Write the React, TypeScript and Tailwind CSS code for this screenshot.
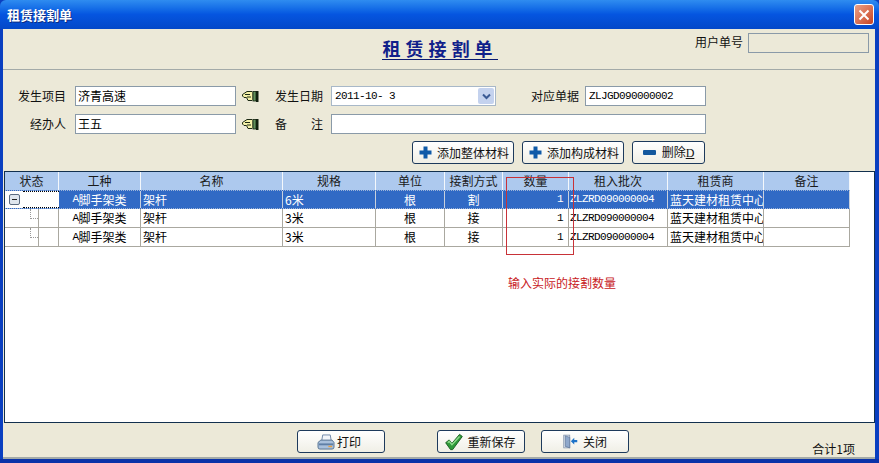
import * as React from 'react';

const cjk = '[font-family:"Noto_Sans_CJK_SC","Liberation_Sans",sans-serif]';
const mono = 'font-["Liberation_Mono",monospace] text-[11px] tracking-[-0.6px]';

const columns = [
  { label: '状态', width: 'w-[54px]' },
  { label: '工种', width: 'w-[82px]' },
  { label: '名称', width: 'w-[142px]' },
  { label: '规格', width: 'w-[93px]' },
  { label: '单位', width: 'w-[69px]' },
  { label: '接割方式', width: 'w-[58px]' },
  { label: '数量', width: 'w-[66px]' },
  { label: '租入批次', width: 'w-[99px]' },
  { label: '租赁商', width: 'w-[96px]' },
  { label: '备注', width: 'w-[86px]' },
];

const rows = [
  { spec: '6米', way: '割', selected: true },
  { spec: '3米', way: '接', selected: false },
  { spec: '3米', way: '接', selected: false },
];

function Hand() {
  return (
    <svg width="17" height="12" viewBox="0 0 17 12" className="shrink-0">
      <path d="M0.5 4.5 L5 1.5 H10 L11 2.5 V9.5 L10 10.5 H6 L4.5 7.5 H2 L0.5 6 Z" fill="#f6f2a8" stroke="#1c2a14" strokeWidth="1" />
      <path d="M3 4.5 H8 M5 7 H9" stroke="#1c2a14" strokeWidth="1" />
      <rect x="11" y="1.5" width="3" height="9.5" fill="#5f8f5a" stroke="#14240f" strokeWidth="0.8" />
      <rect x="14" y="1" width="2.5" height="11" fill="#10200e" />
    </svg>
  );
}

function Plus() {
  return (
    <svg width="13" height="13" viewBox="0 0 13 13" className="shrink-0">
      <path d="M4.5 0.5 H8.5 V4.5 H12.5 V8.5 H8.5 V12.5 H4.5 V8.5 H0.5 V4.5 H4.5 Z" fill="#0f5aa8" />
    </svg>
  );
}

function Minus() {
  return (
    <svg width="13" height="5" viewBox="0 0 13 5" className="shrink-0">
      <rect width="13" height="5" rx="1" fill="#14589e" />
    </svg>
  );
}

function Printer() {
  return (
    <svg width="18" height="16" viewBox="0 0 19 17" className="shrink-0">
      <path d="M6 1 H14 L15 7 H5 Z" fill="#f2f5fa" stroke="#6d86a8" />
      <path d="M1 9 L4 6.5 H16 L18 9 V14 Q18 16 16 16 H3 Q1 16 1 14 Z" fill="#a9c0dc" stroke="#54708f" />
      <rect x="2" y="10" width="15" height="2" fill="#5f7fa6" />
      <rect x="12" y="12.5" width="4" height="1.5" fill="#e8a040" />
    </svg>
  );
}

function Check() {
  return (
    <svg width="18" height="18" viewBox="0 0 26 24" className="shrink-0">
      <path d="M1 13 L6 9 L10 14 L21 1 L25 4 L11 23 H8 Z" fill="#2f9a3a" stroke="#17601f" strokeWidth="1.4" />
      <path d="M4 13 L6 11 L10 16 L21 4" fill="none" stroke="#8fdc8c" strokeWidth="2" />
    </svg>
  );
}

function Door() {
  return (
    <svg width="15" height="15" viewBox="0 0 20 19" className="shrink-0">
      <rect x="1" y="1" width="8" height="17" fill="#dfe8f2" stroke="#7f8ea8" />
      <path d="M3 2 L9 4 V18 L3 16 Z" fill="#8fa8cc" stroke="#50688c" strokeWidth="0.8" />
      <path d="M19 7.5 H15 V4.5 L10.5 9 L15 13.5 V10.5 H19 Z" fill="#1c72c8" />
    </svg>
  );
}

function Label({ children, className }: { children: React.ReactNode; className: string }) {
  return <span className={`shrink-0 whitespace-nowrap text-right text-[12px] leading-none text-[#111] ${className}`}>{children}</span>;
}

function Field({ value, className }: { value?: string; className: string }) {
  return (
    <div className={`flex h-[20px] shrink-0 items-center border border-[#8a9aa8] bg-white px-[2px] text-[12px] text-black ${className}`}>
      {value}
    </div>
  );
}

function ActionButton({ children, className }: { children: React.ReactNode; className: string }) {
  return (
    <button className={`flex shrink-0 items-center justify-center rounded-[3px] border border-[#1d3a5c] bg-gradient-to-b from-white to-[#f0efe6] text-[12px] text-[#111] ${className}`}>
      {children}
    </button>
  );
}

export default function App() {
  return (
    <div className={`relative flex h-[463px] w-[879px] flex-col overflow-hidden bg-[#0a3fc0] ${cjk}`}>
      {/* title bar */}
      <div className="flex h-[29px] shrink-0 items-center justify-between rounded-t-[6px] bg-gradient-to-b from-[#2f8cf0] via-[#0555e0] to-[#0348c8] pl-[7px] pr-[5px]">
        <span className="text-[13px] font-bold text-white [text-shadow:1px_1px_#0a2a80]">租赁接割单</span>
        <div className="flex h-[21px] w-[20px] items-center justify-center rounded-[3px] border border-white bg-gradient-to-br from-[#e8a088] to-[#c8401c]">
          <svg width="12" height="12" viewBox="0 0 12 12">
            <path d="M1.5 1.5 L10.5 10.5 M10.5 1.5 L1.5 10.5" stroke="white" strokeWidth="2" />
          </svg>
        </div>
      </div>

      <div className="ml-[3px] mr-[4px] flex min-h-0 flex-1 flex-col bg-[#ece9d8]">
        {/* heading */}
        <div className="grid h-[41px] shrink-0 grid-cols-[1fr_auto_1fr] border-b border-[#a3aaa8] pl-[1px]">
          <div />
          <span className="mt-[8px] h-[23px] border-b border-[#0a1a70] pl-[1px] text-[18px] font-bold leading-[22px] tracking-[5px] text-[#10208a] [font-family:'Noto_Sans_CJK_SC',serif]">
            租赁接割单
          </span>
          <div className="flex items-start justify-end pr-[6px] pt-[4px]">
            <span className="mr-[5px] mt-[2px] text-[12px] leading-[14px] text-[#111]">用户单号</span>
            <div className="h-[20px] w-[121px] border border-[#8a9aa8] bg-[#ece9d8]" />
          </div>
        </div>

        {/* form */}
        <div className="h-[101px] shrink-0 pl-[1px] pt-[16px]">
          <div className="flex h-[20px] items-center">
            <Label className="w-[62px]">发生项目</Label>
            <Field value="济青高速" className="ml-[9px] w-[161px]" />
            <span className="ml-[6px]"><Hand /></span>
            <Label className="ml-[16px] w-[48px]">发生日期</Label>
            <div className="ml-[8px] flex h-[20px] w-[165px] shrink-0 items-center justify-between border border-[#a8b8c8] bg-white pl-[3px] pr-[1px]">
              <span className={`${mono} text-black`}>2011-10- 3</span>
              <div className="flex h-[16px] w-[16px] items-center justify-center rounded-[2px] bg-[#c4d2ee]">
                <svg width="9" height="7" viewBox="0 0 9 7">
                  <path d="M1 1.5 L4.5 5 L8 1.5" fill="none" stroke="#3a5a94" strokeWidth="2" />
                </svg>
              </div>
            </div>
            <Label className="ml-[35px] w-[48px]">对应单据</Label>
            <div className="ml-[6px] flex h-[20px] w-[121px] shrink-0 items-center border border-[#8a9aa8] bg-white pl-[3px]">
              <span className={`${mono} text-black`}>ZLJGD090000002</span>
            </div>
          </div>
          <div className="mt-[8px] flex h-[20px] items-center">
            <Label className="w-[62px]">经办人</Label>
            <Field value="王五" className="ml-[9px] w-[161px]" />
            <span className="ml-[6px]"><Hand /></span>
            <div className="ml-[16px] flex w-[48px] shrink-0 justify-between text-[12px] leading-none text-[#111]">
              <span>备</span>
              <span>注</span>
            </div>
            <Field className="ml-[8px] w-[375px]" />
          </div>
          <div className="mt-[7px] flex h-[23px] items-center pl-[408px]">
            <ActionButton className="h-[23px] w-[102px] gap-[5px] pl-[2px]"><Plus />添加整体材料</ActionButton>
            <ActionButton className="ml-[8px] h-[23px] w-[102px] gap-[5px] pl-[2px]"><Plus />添加构成材料</ActionButton>
            <ActionButton className="ml-[8px] h-[23px] w-[73px] gap-[6px]">
              <Minus />
              <span>删除<span className="font-['Liberation_Serif',serif] underline">D</span></span>
            </ActionButton>
          </div>
        </div>

        {/* grid */}
        <div className="ml-[1px] min-h-0 flex-1 overflow-hidden border border-[#12304e] bg-white">
          <div className="flex h-[18px] w-[845px] bg-[#adc9ee]">
            {columns.map((c) => (
              <div key={c.label} className={`flex h-full shrink-0 items-center justify-center border-r border-r-[#f4f8fc] text-[12px] text-[#1a1a1a] ${c.width}`}>
                {c.label}
              </div>
            ))}
          </div>
          {rows.map((r, i) => {
            const cell = r.selected
              ? 'border-r border-[#c8d0dc] text-white'
              : 'border-r border-[#aaa8a0] text-black';
            return (
              <div
                key={i}
                className={`flex h-[19px] w-[845px] text-[12px] ${r.selected ? 'border-y border-dotted border-[#9db4d8] bg-[#316ac5]' : 'border-b border-[#aaa8a0]'}`}
              >
                <div className="flex w-[54px] shrink-0 bg-white">
                  {r.selected ? (
                    <>
                      <div className="flex w-[18px] shrink-0 items-center justify-center">
                        <div className="flex h-[11px] w-[11px] items-center justify-center rounded-[2px] border border-[#5a6a80] bg-[#dfe6ee]">
                          <div className="h-[1px] w-[5px] bg-[#222]" />
                        </div>
                      </div>
                      <div className="flex-1 border-y border-dotted border-black" />
                    </>
                  ) : (
                    <>
                      <div className="relative w-[34px] shrink-0 border-r border-[#aaa8a0]">
                        <div className="absolute left-[25px] top-0 h-[10px] border-l border-dotted border-[#999]" />
                        <div className="absolute left-[25px] top-[9px] w-[8px] border-t border-dotted border-[#999]" />
                      </div>
                      <div className="flex-1 border-r border-[#aaa8a0]" />
                    </>
                  )}
                </div>
                <div className={`flex w-[82px] shrink-0 items-center justify-center ${cell}`}>
                  <span className={mono}>A</span>脚手架类
                </div>
                <div className={`flex w-[142px] shrink-0 items-center pl-[2px] ${cell}`}>架杆</div>
                <div className={`flex w-[93px] shrink-0 items-center pl-[2px] ${cell}`}>{r.spec}</div>
                <div className={`flex w-[69px] shrink-0 items-center justify-center ${cell}`}>根</div>
                <div className={`flex w-[58px] shrink-0 items-center justify-center ${cell}`}>{r.way}</div>
                <div className={`flex w-[66px] shrink-0 items-center justify-end pr-[5px] ${cell}`}>
                  <span className={mono}>1</span>
                </div>
                <div className={`flex w-[99px] shrink-0 items-center pl-[1px] ${cell}`}>
                  <span className={mono}>ZLZRD090000004</span>
                </div>
                <div className={`flex w-[96px] shrink-0 items-center overflow-hidden whitespace-nowrap pl-[2px] ${cell}`}>蓝天建材租赁中心</div>
                <div className={`w-[86px] shrink-0 ${cell}`} />
              </div>
            );
          })}
        </div>

        {/* footer */}
        <div className="flex h-[36px] shrink-0 border-b-2 border-[#a3aaa8] pl-[294px] pr-[20px]">
          <ActionButton className="mt-[7px] h-[23px] w-[88px] gap-[2px] pr-[4px]"><Printer />打印</ActionButton>
          <ActionButton className="ml-[52px] mt-[7px] h-[23px] w-[88px] gap-[4px] pr-[1px]"><Check />重新保存</ActionButton>
          <ActionButton className="ml-[16px] mt-[7px] h-[23px] w-[88px] gap-[5px]"><Door />关闭</ActionButton>
          <span className="ml-auto mt-[19px] text-[12px] leading-[14px] text-[#111]">合计1项</span>
        </div>
      </div>
      <div className="h-[4px] shrink-0 bg-[#0a32a8]" />

      {/* annotation drawn over the grid */}
      <div className="absolute left-[506px] top-[177px] h-[78px] w-[68px] border border-[#c83238]" />
      <span className="absolute left-[508px] top-[276px] text-[12px] leading-[14px] text-[#c8201c]">输入实际的接割数量</span>
    </div>
  );
}
